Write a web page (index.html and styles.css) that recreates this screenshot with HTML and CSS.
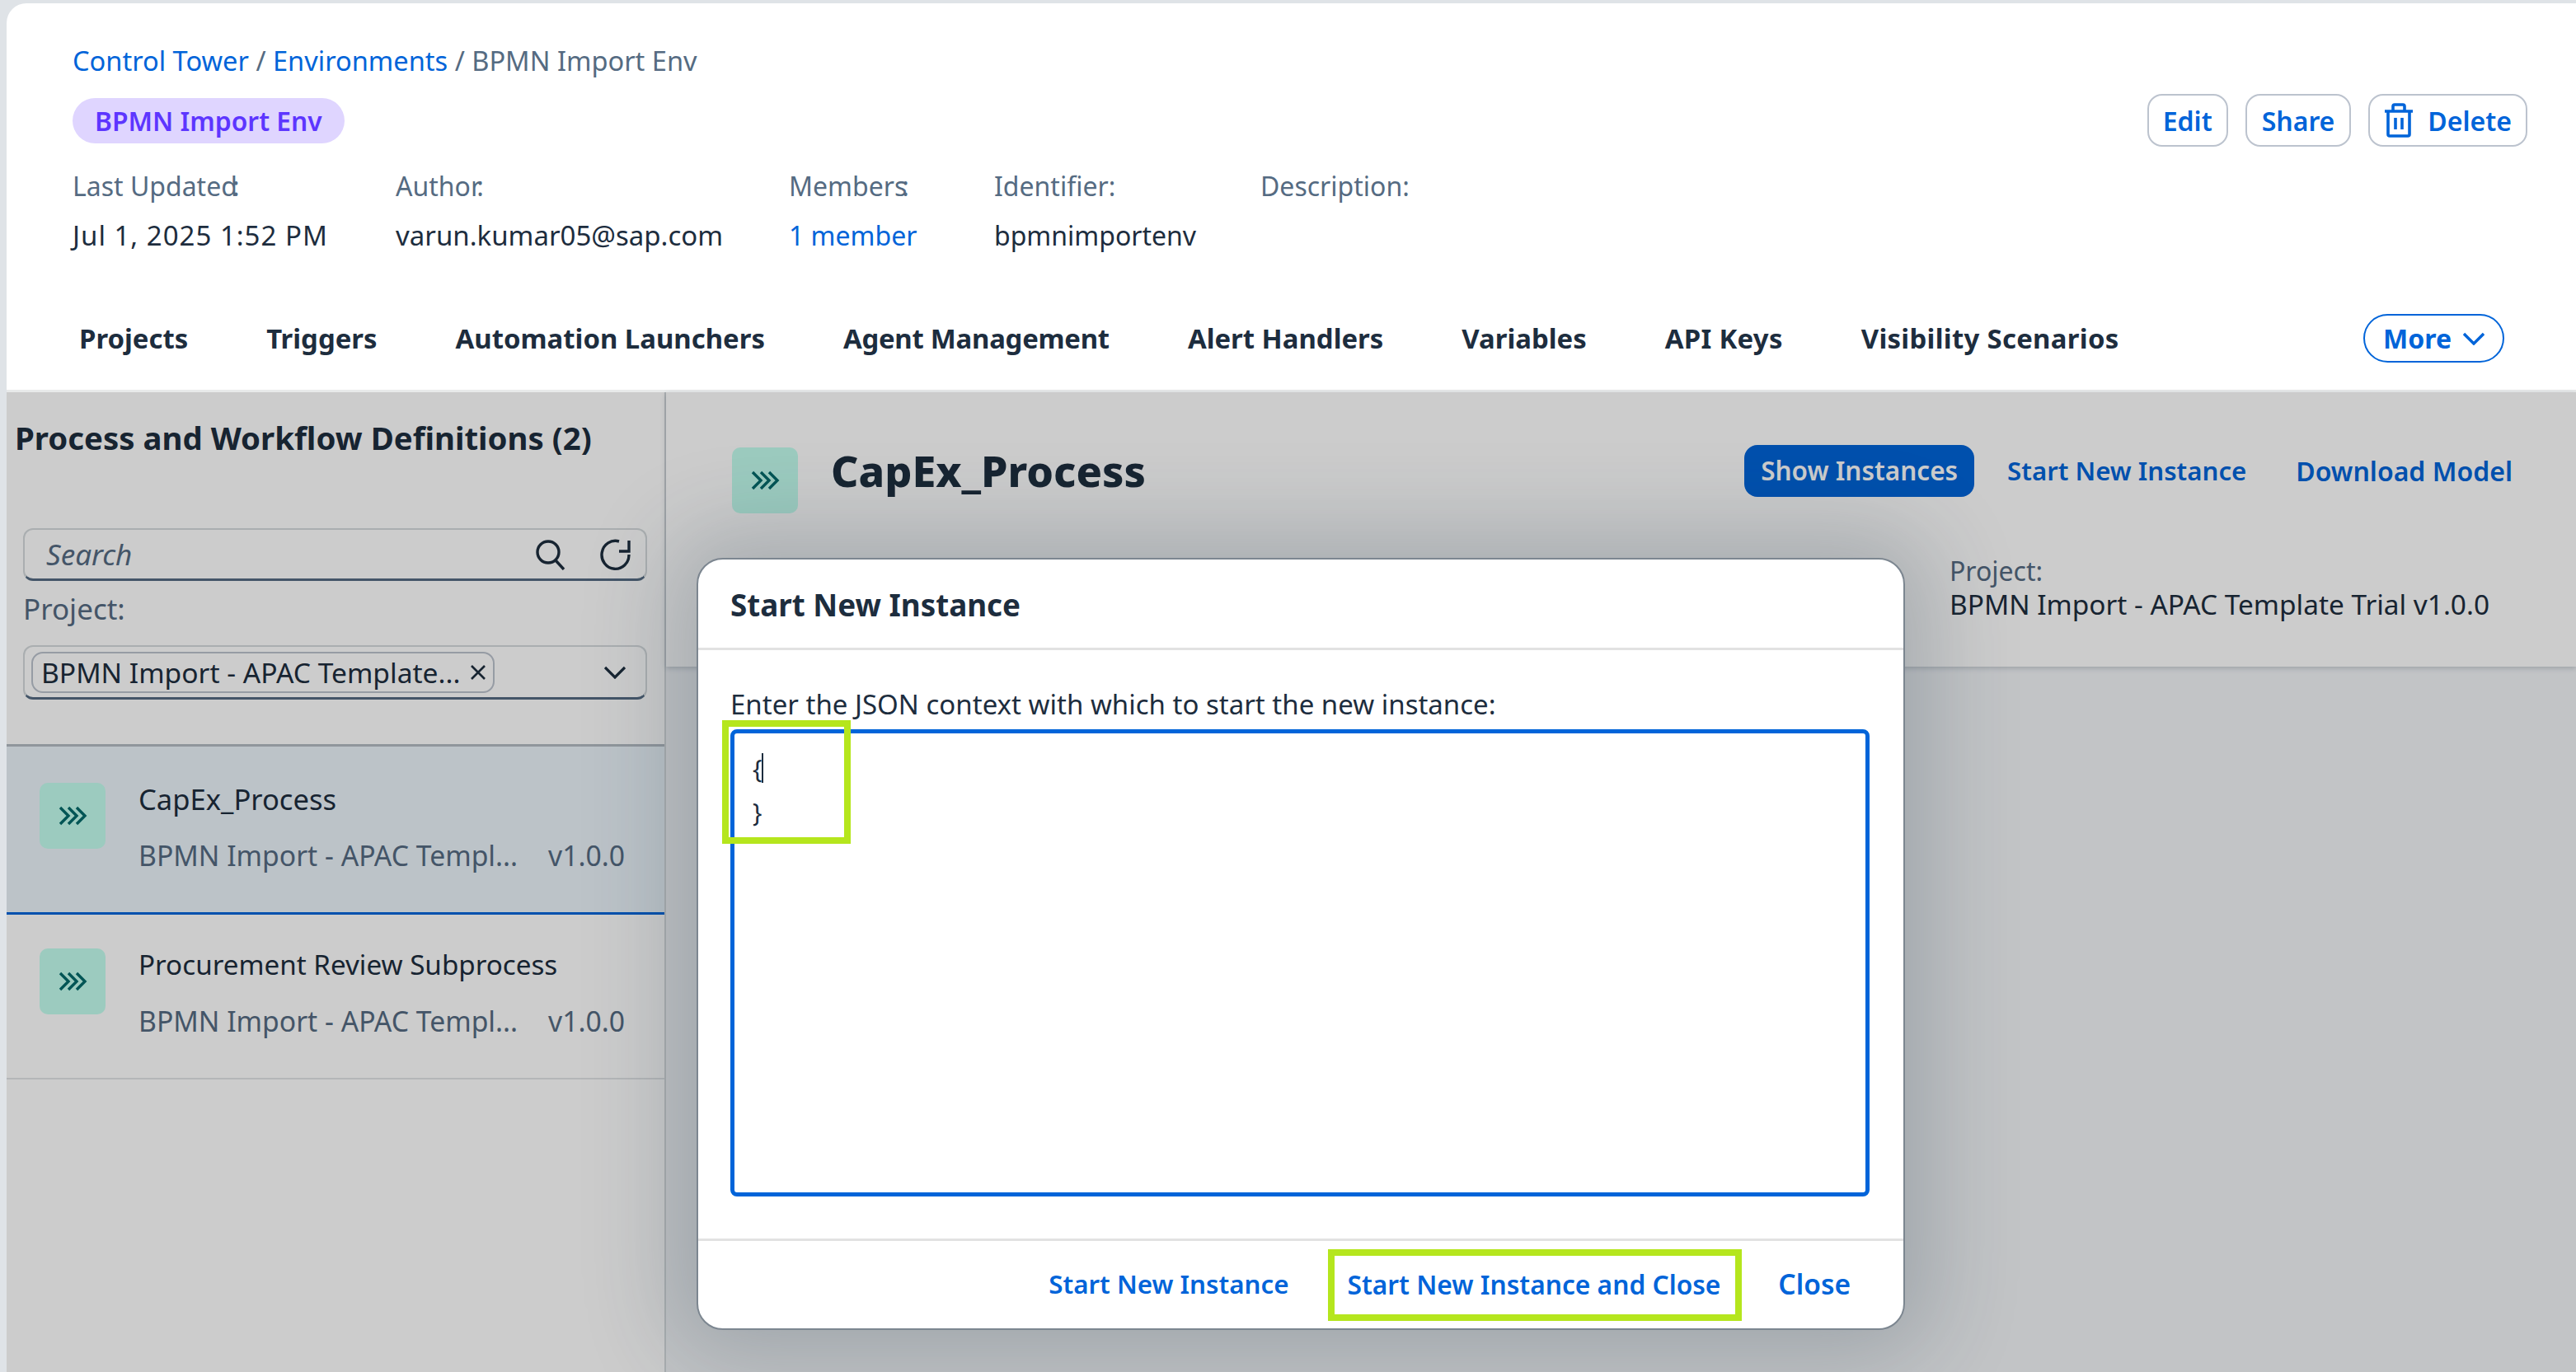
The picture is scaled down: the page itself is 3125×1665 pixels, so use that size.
FILE: index.html
```html
<!DOCTYPE html>
<html>
  <head>
    <meta charset="utf-8">
    <title>BPMN Import Env</title>
    <link rel="stylesheet" href="styles.css">
  </head>
  <body>
    <div id="page">
      <div id="header">
        <div class="headTop">
          <div>
            <div class="crumbs"><a>Control Tower</a> / <a>Environments</a> / BPMN Import Env</div>
            <span class="tag">BPMN Import Env</span>
          </div>
          <div class="actions">
            <a class="btn btnEdit">Edit</a>
            <a class="btn btnShare">Share</a>
            <a class="btn btnDelete">
              <svg width="36" height="42" viewBox="0 0 36 42" fill="none" stroke="#0064d9" stroke-width="3.6">
                <path d="M1 10h34M5 10v28q0 2 2 2h22q2 0 2-2V10M11 10V4q0-2 2-2h10q2 0 2 2v6M14 18v14M22 18v14"/>
              </svg>
              Delete
            </a>
          </div>
        </div>
        <div class="meta">
          <div class="col colDate"><label>Last Updated<span class="colon">:</span></label><span class="valDate">Jul 1, 2025 1:52 PM</span></div>
          <div class="col colAuthor"><label>Author<span class="colon">:</span></label><span class="valAuthor">varun.kumar05@sap.com</span></div>
          <div class="col colMembers"><label>Members<span class="colon">:</span></label><a>1 member</a></div>
          <div class="col colIdent"><label>Identifier:</label><span>bpmnimportenv</span></div>
          <div class="col"><label>Description:</label></div>
        </div>
        <div class="tabs">
          <a>Projects</a>
          <a>Triggers</a>
          <a>Automation Launchers</a>
          <a class="tabTight">Agent Management</a>
          <a>Alert Handlers</a>
          <a>Variables</a>
          <a class="tabWide">API Keys</a>
          <a class="tabWide">Visibility Scenarios</a>
          <span class="more">More
            <svg width="26" height="16" viewBox="0 0 26 16" fill="none" stroke="#0064d9" stroke-width="3.4"><path d="M1 2l12 12L25 2"/></svg>
          </span>
        </div>
      </div>

      <div id="content">
        <div id="sidebar">
          <h2>Process and Workflow Definitions (2)</h2>
          <div class="filters">
            <div class="field search">
              <i>Search</i>
              <svg width="38" height="38" viewBox="0 0 38 38" fill="none" stroke="#1d2d3e" stroke-width="3.4"><circle cx="16" cy="16" r="13"/><path d="M25 26l10 11"/></svg>
              <svg width="40" height="40" viewBox="0 0 40 40" fill="none" stroke="#1d2d3e" stroke-width="3.4"><path d="M36 20A16.500 17 0 1 1 24 4M36 3v13H24"/></svg>
            </div>
            <div class="projLabel">Project:</div>
            <div class="field select">
              <span class="token">BPMN Import - APAC Template...
                <svg width="20" height="20" viewBox="0 0 20 20" stroke="#1d2d3e" stroke-width="2.6"><path d="M2 2l16 16M18 2L2 18"/></svg>
              </span>
              <svg class="chev" width="26" height="16" viewBox="0 0 26 16" fill="none" stroke="#1d2d3e" stroke-width="3.2"><path d="M1 2l12 12L25 2"/></svg>
            </div>
          </div>
          <div class="list">
            <div class="item selected">
              <div class="procIcon"><svg width="36" height="24" viewBox="0 0 36 24" fill="none" stroke="#046b6b" stroke-width="3.4"><path d="M3 2l10 10L3 22M13 2l10 10-10 10M23 2l10 10-10 10"/></svg></div>
              <div class="itemText">
                <div class="itemName capex">CapEx_Process</div>
                <div class="itemSub"><span>BPMN Import - APAC Templ...</span><span>v1.0.0</span></div>
              </div>
            </div>
            <div class="item">
              <div class="procIcon"><svg width="36" height="24" viewBox="0 0 36 24" fill="none" stroke="#046b6b" stroke-width="3.4"><path d="M3 2l10 10L3 22M13 2l10 10-10 10M23 2l10 10-10 10"/></svg></div>
              <div class="itemText">
                <div class="itemName">Procurement Review Subprocess</div>
                <div class="itemSub"><span>BPMN Import - APAC Templ...</span><span>v1.0.0</span></div>
              </div>
            </div>
          </div>
        </div>

        <div id="detail">
          <div class="detailHead">
            <div class="detailTop">
              <div class="procIcon"><svg width="36" height="24" viewBox="0 0 36 24" fill="none" stroke="#046b6b" stroke-width="3.4"><path d="M3 2l10 10L3 22M13 2l10 10-10 10M23 2l10 10-10 10"/></svg></div>
              <h1>CapEx_Process</h1>
              <a class="primary">Show Instances</a>
              <a class="link linkStart">Start New Instance</a>
              <a class="link linkModel">Download Model</a>
            </div>
            <div class="detailMeta">
              <label>Project:</label>
              <span>BPMN Import - APAC Template Trial v1.0.0</span>
            </div>
          </div>
        </div>
        <div id="dim"></div>
      </div>

      <div id="dialog">
        <div class="dlgHead">Start New Instance</div>
        <div class="dlgBody">
          <div class="dlgLabel">Enter the JSON context with which to start the new instance:</div>
          <div class="jsonBox">
            <div class="jsonText">{<b class="caret"></b><br>}</div>
          </div>
          <div class="hilite hiliteJson"></div>
        </div>
        <div class="dlgFoot">
          <a class="footStart">Start New Instance</a>
          <a class="boxed">Start New Instance and Close</a>
          <a class="footClose">Close</a>
        </div>
      </div>
    </div>
  </body>
</html>
```

FILE: styles.css
```css
html, body {
  margin: 0;
  height: 100%;
}
body {
  background: #dfe3e7;
  color: #1d2d3e;
  font-family: "Noto Sans", "Liberation Sans", sans-serif;
  font-size: 32px;
  overflow: hidden;
}
a {
  color: #0064d9;
  text-decoration: none;
}

#page {
  position: relative;
  height: 1665px;
  padding: 4px 0 0 8px;
  box-sizing: border-box;
  display: flex;
  flex-direction: column;
}

/* header */
#header {
  background: #fff;
  border-radius: 24px 0 0 0;
  height: 469px;
  padding: 0 59px 0 80px;
  box-sizing: border-box;
  flex: none;
}
.headTop {
  display: flex;
  justify-content: space-between;
  height: 182px;
}
.crumbs {
  color: #556b82;
  padding-top: 48px;
  line-height: 44px;
  font-size: 32.6px;
}
.tag {
  display: inline-block;
  margin-top: 23px;
  background: #dfd5ff;
  color: #5d36ff;
  font-weight: 600;
  font-size: 31.8px;
  line-height: 55px;
  padding: 0 27px;
  border-radius: 28px;
}
.actions {
  display: flex;
  gap: 21px;
  padding-top: 110px;
  align-items: flex-start;
}
.btn {
  height: 64px;
  box-sizing: border-box;
  border: 2px solid #bcc3ce;
  border-radius: 18px;
  padding: 0 17px;
  display: flex;
  align-items: center;
  gap: 17px;
  font-weight: 600;
}
.btnShare {
  padding: 0 18px;
}
.meta {
  display: flex;
  padding-top: 18px;
}
.col {
  display: flex;
  flex-direction: column;
  gap: 16px;
  line-height: 44px;
  white-space: nowrap;
}
.col label {
  color: #556b82;
}
.colon {
  margin-left: -6px;
}
.colDate { width: 392px; }
.colAuthor { width: 477px; }
.colMembers { width: 249px; }
.colIdent { width: 323px; }
.valDate {
  font-size: 33px;
  letter-spacing: 1px;
}
.valAuthor {
  font-size: 33px;
}

.tabs {
  display: flex;
  align-items: center;
  gap: 95px;
  padding: 73px 0 0 8px;
  font-weight: 700;
  font-size: 32.9px;
}
.tabs a {
  color: #1d2d3e;
}
.tabs .tabTight {
  letter-spacing: -.25px;
}
.tabs .tabWide {
  letter-spacing: .3px;
}
.more {
  margin-left: auto;
  margin-right: 28px;
  height: 59px;
  box-sizing: border-box;
  border: 2px solid #0064d9;
  border-radius: 30px;
  color: #0064d9;
  font-size: 32px;
  padding: 0 22px;
  display: flex;
  align-items: center;
  gap: 14px;
}

/* lower part */
#content {
  position: relative;
  flex: 1;
  display: flex;
  border-top: 3px solid #e8eaea;
}
#dim {
  position: absolute;
  inset: 0;
  background: rgba(0, 0, 0, .2);
}
#sidebar {
  width: 800px;
  box-sizing: border-box;
  background: #fff;
  border-right: 2px solid #d5dadd;
  flex: none;
}
#sidebar h2 {
  margin: 0;
  padding: 30px 0 0 10px;
  font-size: 38.4px;
  line-height: 50px;
}
.filters {
  padding: 85px 21px 0 20px;
}
.field {
  border: 2px solid #d5dadd;
  border-bottom: 3px solid #556b82;
  border-radius: 12px;
  box-sizing: border-box;
  display: flex;
  align-items: center;
}
.search {
  height: 64px;
  padding: 0 16px 0 26px;
  gap: 40px;
  color: #556b82;
  font-size: 35px;
}
.search i {
  flex: 1;
}
.projLabel {
  color: #556b82;
  line-height: 44px;
  padding-top: 12px;
  font-size: 35px;
}
.select {
  margin-top: 22px;
  height: 66px;
  padding: 0 24px 0 8px;
  justify-content: space-between;
}
.token {
  border: 2px solid #bcc3ce;
  border-radius: 14px;
  height: 50px;
  width: 562px;
  box-sizing: border-box;
  display: flex;
  align-items: center;
  justify-content: space-between;
  padding: 0 8px 0 10px;
  white-space: nowrap;
  font-size: 33.6px;
}
.list {
  margin-top: 54px;
  border-top: 3px solid #b5bcc4;
}
.item {
  display: flex;
  height: 200px;
  box-sizing: border-box;
  padding: 41px 48px 0 40px;
  gap: 40px;
  border-bottom: 2px solid #e2e4e6;
}
.item.selected {
  height: 204px;
  padding-top: 44px;
  background: #ebf4fb;
  border-bottom: 3px solid #0064d9;
}
.procIcon {
  width: 80px;
  height: 80px;
  flex: none;
  background: #c3feef;
  border-radius: 10px;
  display: flex;
  align-items: center;
  justify-content: center;
}
.itemText {
  flex: 1;
  margin-top: -2px;
}
.itemName {
  line-height: 44px;
  font-size: 33.2px;
}
.itemName.capex {
  font-size: 34.6px;
}
.itemSub {
  display: flex;
  justify-content: space-between;
  margin-top: 24px;
  line-height: 44px;
  color: #556b82;
  font-size: 33.7px;
}

#detail {
  flex: 1;
  background: #f3f5f8;
}
.detailHead {
  background: #fff;
  height: 333px;
  box-sizing: border-box;
  padding: 67px 77px 0 80px;
  box-shadow: 0 2px 6px rgba(34, 54, 73, .22);
}
.detailTop {
  display: flex;
  align-items: flex-start;
}
.detailTop h1 {
  margin: 0 auto 0 40px;
  font-size: 52px;
  font-weight: 800;
  line-height: 56px;
}
.primary {
  background: #0064d9;
  color: #fff;
  font-weight: 600;
  font-size: 31.5px;
  height: 63px;
  line-height: 61px;
  padding: 0 20px;
  border-radius: 16px;
  margin-top: -3px;
}
.link {
  font-weight: 600;
  font-size: 31.2px;
  line-height: 57px;
}
.linkStart { margin-left: 40px; }
.linkModel {
  margin-left: 60px;
  font-size: 32px;
}
.detailMeta {
  display: flex;
  flex-direction: column;
  margin: 50px 0 0 1477px;
  line-height: 40px;
  white-space: nowrap;
}
.detailMeta span {
  font-size: 33.4px;
}
.detailMeta label {
  color: #556b82;
}

/* dialog */
#dialog {
  position: absolute;
  left: 845px;
  top: 677px;
  width: 1466px;
  height: 937px;
  box-sizing: border-box;
  background: #fff;
  border: 2px solid #7c8690;
  border-radius: 32px;
  display: flex;
  flex-direction: column;
  overflow: hidden;
  box-shadow: 0 0 110px 30px rgba(34, 54, 73, .22);
}
.dlgHead {
  height: 110px;
  box-sizing: border-box;
  padding: 32px 0 0 39px;
  line-height: 46px;
  font-size: 36.8px;
  font-weight: 700;
  border-bottom: 3px solid #e2e2e2;
  flex: none;
}
.dlgBody {
  position: relative;
  flex: 1;
  padding: 44px 41px 0 39px;
}
.dlgLabel {
  line-height: 44px;
  font-size: 33px;
}
.jsonBox {
  margin-top: 8px;
  height: 567px;
  box-sizing: border-box;
  border: 5px solid #0064d9;
  border-radius: 8px;
  padding: 16px 22px;
}
.jsonText {
  font-size: 30px;
  line-height: 53px;
}
.caret {
  display: inline-block;
  width: 2px;
  height: 36px;
  background: #1d2d3e;
  vertical-align: -6px;
}
.hilite {
  position: absolute;
  left: 29px;
  top: 85px;
  width: 156px;
  height: 150px;
  box-sizing: border-box;
  border: 8px solid #b5e61d;
}
.dlgFoot {
  height: 109px;
  box-sizing: border-box;
  border-top: 3px solid #e2e2e2;
  flex: none;
  display: flex;
  justify-content: flex-end;
  align-items: center;
  padding: 0 64px 2px 0;
  gap: 47px;
  font-weight: 600;
  font-size: 31.7px;
}
.footStart {
  font-size: 31.3px;
}
.footClose {
  font-size: 33.5px;
  margin-left: -3px;
}
.boxed {
  border: 8px solid #b5e61d;
  height: 87px;
  line-height: 69px;
  box-sizing: border-box;
  padding: 0 18px 0 16px;
  margin-top: 2px;
}
```
